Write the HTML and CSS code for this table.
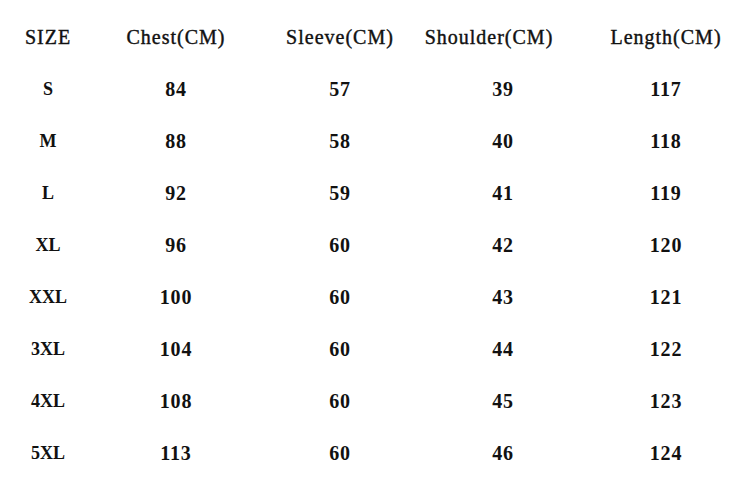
FILE: index.html
```html
<!DOCTYPE html>
<html>
<head>
<meta charset="utf-8">
<link rel="stylesheet" href="styles.css">
</head>
<body>
<div class="table">
  <div class="row head">
    <div class="cell">SIZE</div>
    <div class="cell">Chest(CM)</div>
    <div class="cell">Sleeve(CM)</div>
    <div class="cell shoulder">Shoulder(CM)</div>
    <div class="cell last">Length(CM)</div>
  </div>
  <div class="row"><div class="cell size">S</div><div class="cell">84</div><div class="cell">57</div><div class="cell">39</div><div class="cell last">117</div></div>
  <div class="row"><div class="cell size">M</div><div class="cell">88</div><div class="cell">58</div><div class="cell">40</div><div class="cell last">118</div></div>
  <div class="row"><div class="cell size">L</div><div class="cell">92</div><div class="cell">59</div><div class="cell">41</div><div class="cell last">119</div></div>
  <div class="row"><div class="cell size">XL</div><div class="cell">96</div><div class="cell">60</div><div class="cell">42</div><div class="cell last">120</div></div>
  <div class="row"><div class="cell size">XXL</div><div class="cell">100</div><div class="cell">60</div><div class="cell">43</div><div class="cell last">121</div></div>
  <div class="row"><div class="cell size">3XL</div><div class="cell">104</div><div class="cell">60</div><div class="cell">44</div><div class="cell last">122</div></div>
  <div class="row"><div class="cell size">4XL</div><div class="cell">108</div><div class="cell">60</div><div class="cell">45</div><div class="cell last">123</div></div>
  <div class="row"><div class="cell size">5XL</div><div class="cell">113</div><div class="cell">60</div><div class="cell">46</div><div class="cell last">124</div></div>
</div>
</body>
</html>
```
FILE: styles.css
```css
html, body {
  margin: 0;
  padding: 0;
  background: #ffffff;
}
body {
  width: 746px;
  height: 492px;
  overflow: hidden;
  font-family: "Liberation Serif", "DejaVu Serif", serif;
  color: #111111;
}
.table {
  padding-top: 11px;
}
.row {
  display: grid;
  grid-template-columns: 96px 160px 168px 158px 164px;
  height: 52px;
  align-items: center;
}
.cell {
  text-align: center;
  font-size: 20px;
  letter-spacing: 0.8px;
  font-weight: bold;
}
.cell.size {
  font-size: 18px;
  letter-spacing: 0;
}
.head .cell {
  font-weight: normal;
  letter-spacing: 1px;
  -webkit-text-stroke: 0.4px #111;
}
.cell.last {
  padding-left: 4px;
}
.head .cell.shoulder {
  padding-right: 28px;
}
```
